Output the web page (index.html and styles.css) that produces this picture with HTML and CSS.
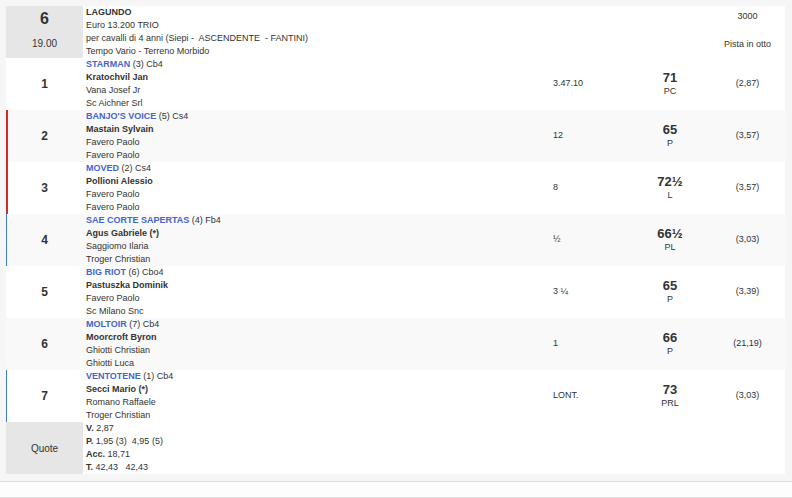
FILE: index.html
```html
<!DOCTYPE html>
<html lang="it">
<head>
<meta charset="utf-8">
<title>Lagundo</title>
<link rel="stylesheet" href="styles.css">
</head>
<body>
<div class="page">
  <div class="race">
    <div class="row head">
      <div class="cell lead">
        <div class="bignum">6</div>
        <div class="hour">19.00</div>
      </div>
      <div class="cell info">
        <div class="b">LAGUNDO</div>
        <div>Euro 13.200 TRIO</div>
        <div>per cavalli di 4 anni (Siepi -&nbsp; ASCENDENTE&nbsp; - FANTINI)</div>
        <div>Tempo Vario - Terreno Morbido</div>
      </div>
      <div class="cell"></div>
      <div class="cell"></div>
      <div class="cell dist">
        <div class="len">3000</div>
        <div class="track">Pista in otto</div>
      </div>
    </div>

    <div class="row">
      <div class="cell pos">1</div>
      <div class="cell info">
        <div><span class="horse">STARMAN</span> (3) Cb4</div>
        <div class="b">Kratochvil Jan</div>
        <div>Vana Josef Jr</div>
        <div>Sc Aichner Srl</div>
      </div>
      <div class="cell gap">3.47.10</div>
      <div class="cell wt"><div class="kg">71</div><div class="sub">PC</div></div>
      <div class="cell odds">(2,87)</div>
    </div>

    <div class="row alt red">
      <div class="cell pos">2</div>
      <div class="cell info">
        <div><span class="horse">BANJO'S VOICE</span> (5) Cs4</div>
        <div class="b">Mastain Sylvain</div>
        <div>Favero Paolo</div>
        <div>Favero Paolo</div>
      </div>
      <div class="cell gap">12</div>
      <div class="cell wt"><div class="kg">65</div><div class="sub">P</div></div>
      <div class="cell odds">(3,57)</div>
    </div>

    <div class="row red">
      <div class="cell pos">3</div>
      <div class="cell info">
        <div><span class="horse">MOVED</span> (2) Cs4</div>
        <div class="b">Pollioni Alessio</div>
        <div>Favero Paolo</div>
        <div>Favero Paolo</div>
      </div>
      <div class="cell gap">8</div>
      <div class="cell wt"><div class="kg">72½</div><div class="sub">L</div></div>
      <div class="cell odds">(3,57)</div>
    </div>

    <div class="row alt blue">
      <div class="cell pos">4</div>
      <div class="cell info">
        <div><span class="horse">SAE CORTE SAPERTAS</span> (4) Fb4</div>
        <div class="b">Agus Gabriele (*)</div>
        <div>Saggiomo Ilaria</div>
        <div>Troger Christian</div>
      </div>
      <div class="cell gap">½</div>
      <div class="cell wt"><div class="kg">66½</div><div class="sub">PL</div></div>
      <div class="cell odds">(3,03)</div>
    </div>

    <div class="row">
      <div class="cell pos">5</div>
      <div class="cell info">
        <div><span class="horse">BIG RIOT</span> (6) Cbo4</div>
        <div class="b">Pastuszka Dominik</div>
        <div>Favero Paolo</div>
        <div>Sc Milano Snc</div>
      </div>
      <div class="cell gap">3 ¼</div>
      <div class="cell wt"><div class="kg">65</div><div class="sub">P</div></div>
      <div class="cell odds">(3,39)</div>
    </div>

    <div class="row alt">
      <div class="cell pos">6</div>
      <div class="cell info">
        <div><span class="horse">MOLTOIR</span> (7) Cb4</div>
        <div class="b">Moorcroft Byron</div>
        <div>Ghiotti Christian</div>
        <div>Ghiotti Luca</div>
      </div>
      <div class="cell gap">1</div>
      <div class="cell wt"><div class="kg">66</div><div class="sub">P</div></div>
      <div class="cell odds">(21,19)</div>
    </div>

    <div class="row blue">
      <div class="cell pos">7</div>
      <div class="cell info">
        <div><span class="horse">VENTOTENE</span> (1) Cb4</div>
        <div class="b">Secci Mario (*)</div>
        <div>Romano Raffaele</div>
        <div>Troger Christian</div>
      </div>
      <div class="cell gap">LONT.</div>
      <div class="cell wt"><div class="kg">73</div><div class="sub">PRL</div></div>
      <div class="cell odds">(3,03)</div>
    </div>

    <div class="row">
      <div class="cell lead quote">Quote</div>
      <div class="cell info">
        <div><span class="b">V.</span> 2,87</div>
        <div><span class="b">P.</span> 1,95 (3)&nbsp; 4,95 (5)</div>
        <div><span class="b">Acc.</span> 18,71</div>
        <div><span class="b">T.</span> 42,43&nbsp;&nbsp; 42,43</div>
      </div>
      <div class="cell"></div>
      <div class="cell"></div>
      <div class="cell"></div>
    </div>
  </div>
  <div class="footer"></div>
</div>
</body>
</html>
```

FILE: styles.css
```css
* { box-sizing: border-box; }

html, body {
  margin: 0;
  padding: 0;
  background: #f6f6f6;
}

body {
  font-family: "Liberation Sans", Arial, sans-serif;
  font-size: 9px;
  color: #333;
}

.page {
  padding: 6px 7px 0 6px;
}

.race {
  background: #fff;
}

.row {
  display: grid;
  grid-template-columns: 77px 470px 77px 80px 75px;
  height: 52px;
  background: #fff;
}

.row.alt { background: #f9f9f9; }
.row.red { box-shadow: inset 2px 0 0 #cc2b2b; }
.row.blue { box-shadow: inset 1px 0 0 #3f7bd8; }

.cell {
  line-height: 13px;
}

.lead {
  background: #e6e6e6;
  display: flex;
  flex-direction: column;
  align-items: center;
}

.bignum {
  font-size: 16px;
  font-weight: bold;
  line-height: 20px;
  margin-top: 3px;
}

.hour {
  font-size: 10px;
  line-height: 12px;
  margin-top: 9px;
}

.quote {
  justify-content: center;
  font-size: 10px;
}

.info {
  padding-left: 3px;
  white-space: nowrap;
}

.b { font-weight: bold; }

.horse {
  color: #4465cc;
  font-weight: bold;
}

.pos {
  display: flex;
  align-items: center;
  justify-content: center;
  font-size: 12px;
  font-weight: bold;
}

.gap {
  display: flex;
  align-items: center;
  padding-bottom: 1px;
}

.wt {
  display: flex;
  flex-direction: column;
  align-items: center;
  justify-content: center;
  padding-bottom: 2px;
}

.kg {
  font-size: 13px;
  font-weight: bold;
  line-height: 15px;
}

.sub {
  line-height: 12px;
}

.odds {
  display: flex;
  align-items: center;
  justify-content: center;
  padding-bottom: 1px;
}

.dist {
  display: flex;
  flex-direction: column;
  align-items: center;
}

.len {
  margin-top: 4px;
  line-height: 12px;
}

.track {
  margin-top: 16px;
  line-height: 12px;
}

.footer {
  margin: 7px -7px 0 -6px;
  height: 17px;
  border-top: 1px solid #dedede;
  border-bottom: 1px solid #dedede;
  background: #fdfdfd;
}
```
